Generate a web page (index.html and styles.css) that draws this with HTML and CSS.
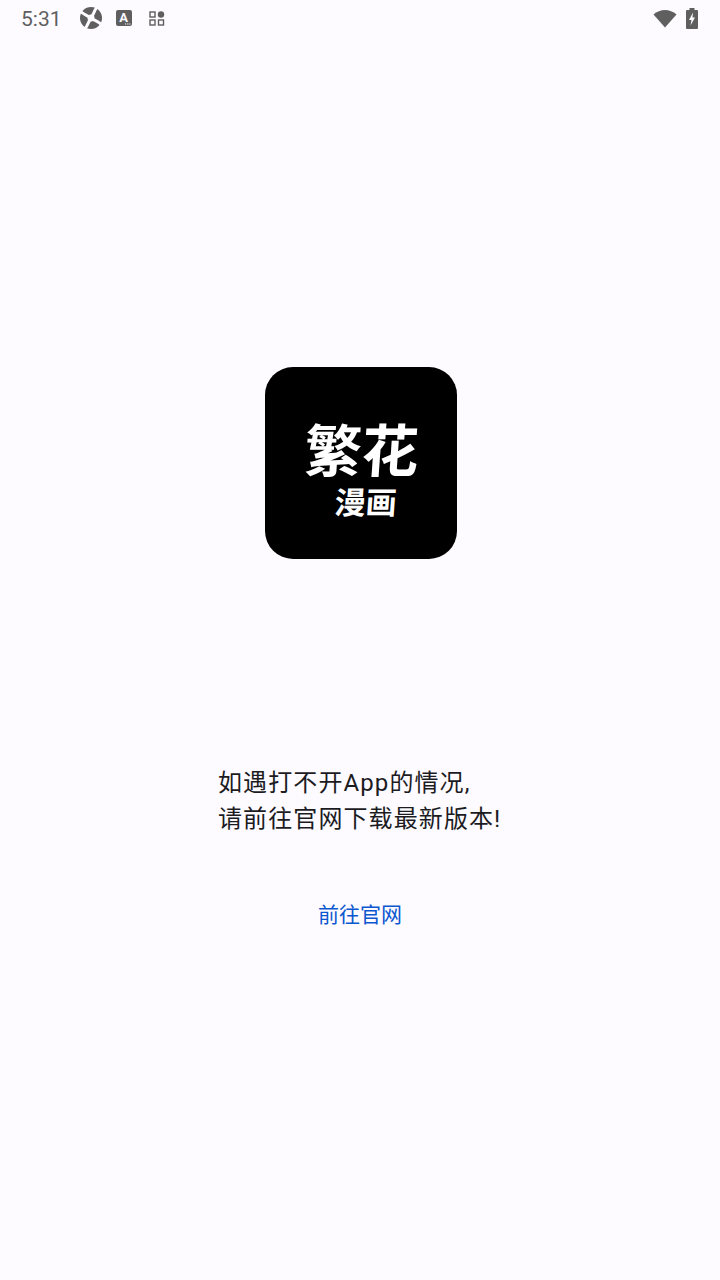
FILE: index.html
```html
<!DOCTYPE html>
<html lang="zh-CN">

<head>
    <meta charset="UTF-8">
    <meta name="viewport" content="width=device-width, initial-scale=1.0">
    <title>繁花漫画</title>
    <link rel="stylesheet" href="styles.css">
</head>

<body>
    <div class="status-bar">
        <div class="status-left">
            <span class="clock">5:31</span>
            <svg class="icon-ball" width="24" height="24" viewBox="0 0 24 24">
                <circle cx="12" cy="12" r="11" fill="#5f5f5f"/>
                <g fill="none" stroke="#fdfbff" stroke-width="3">
                    <path d="M1 5 C5 9 8 9 12 12"/>
                    <path d="M19 0 C15 4 15 8 12 12"/>
                    <path d="M23 19 C19 15 16 15 12 12"/>
                    <path d="M5 24 C9 20 9 16 12 12"/>
                </g>
                <circle cx="12" cy="12" r="3.500" fill="#fdfbff"/>
            </svg>
            <svg class="icon-a" width="16" height="16" viewBox="0 0 16 16">
                <rect width="16" height="16" rx="2" fill="#5f5f5f"/>
                <text x="7.500" y="12" class="icon-a-letter">A</text>
                <path d="M9 14h1.200M11.200 14h1.200M13.200 14h1.200" stroke="#fdfbff" stroke-width="1.200"/>
            </svg>
            <svg class="icon-grid" width="16" height="15" viewBox="0 0 16 15" fill="none" stroke="#5f5f5f" stroke-width="1.400">
                <rect x="1" y="1" width="5" height="5"/>
                <circle cx="12" cy="3.500" r="3.200" fill="#5f5f5f" stroke="none"/>
                <rect x="1" y="9" width="5" height="5"/>
                <rect x="9.500" y="9" width="5" height="5"/>
            </svg>
        </div>
        <div class="status-right">
            <svg width="24" height="19" viewBox="0 0 24 19">
                <path d="M0.500 5.500 C7 -0.500 17 -0.500 23.500 5.500 L12 18.500 Z" fill="#5f5f5f"/>
            </svg>
            <svg width="12" height="21" viewBox="0 0 12 21">
                <path d="M3.500 0h5v2H11a1 1 0 0 1 1 1v17a1 1 0 0 1-1 1H1a1 1 0 0 1-1-1V3a1 1 0 0 1 1-1h2.500z" fill="#5f5f5f"/>
                <path d="M7 4.500 3 12h2.500L4.500 17.500 9 9.500H6.500z" fill="#fdfbff"/>
            </svg>
        </div>
    </div>

    <div class="page">
        <div class="logo">
            <div class="logo-big">繁花</div>
            <div class="logo-small">漫画</div>
        </div>
        <p class="notice">如遇打不开App的情况,<br>请前往官网下载最新版本!</p>
        <a class="site-link" href="#">前往官网</a>
    </div>
</body>

</html>
```

FILE: styles.css
```css
* {
    box-sizing: border-box;
}

body {
    margin: 0;
    height: 1280px;
    overflow: hidden;
    background-color: #fdfbff;
    font-family: "Roboto", "Noto Sans CJK SC", sans-serif;
}

.status-bar {
    height: 38px;
    padding: 0 22px 2px 21px;
    display: flex;
    justify-content: space-between;
    align-items: center;
}

.status-left {
    display: flex;
    align-items: center;
}

.status-right {
    display: flex;
    align-items: center;
    gap: 9px;
}

.clock {
    font-size: 21px;
    line-height: 26px;
    padding-top: 2px;
    color: #5f5f5f;
    width: 58px;
}

.icon-a {
    margin-left: 13px;
}

.icon-grid {
    margin-left: 17px;
}

.icon-a-letter {
    font-family: "Roboto", sans-serif;
    font-size: 13px;
    font-weight: 700;
    fill: #fdfbff;
    text-anchor: middle;
}

.page {
    display: flex;
    flex-direction: column;
    align-items: center;
}

.logo {
    width: 192px;
    height: 192px;
    margin-top: 329px;
    margin-left: 2px;
    border-radius: 28px;
    background-color: #000000;
    color: #ffffff;
    display: flex;
    flex-direction: column;
    align-items: center;
    padding-top: 50px;
    font-family: "Noto Sans CJK SC", sans-serif;
    font-weight: 700;
}

.logo-big {
    font-size: 57px;
    line-height: 60px;
    margin-left: 2px;
    transform: skewX(-4deg);
}

.logo-small {
    font-size: 31px;
    line-height: 36px;
    margin-top: 6px;
    margin-left: 9px;
    transform: skewX(-4deg);
}

.notice {
    margin: 206px 0 0;
    width: 284px;
    font-size: 24px;
    letter-spacing: 1.1px;
    line-height: 36px;
    color: #1c1b1f;
    white-space: nowrap;
}

.site-link {
    margin-top: 63px;
    font-size: 21px;
    line-height: 30px;
    color: #0b57d0;
    text-decoration: none;
}
```
